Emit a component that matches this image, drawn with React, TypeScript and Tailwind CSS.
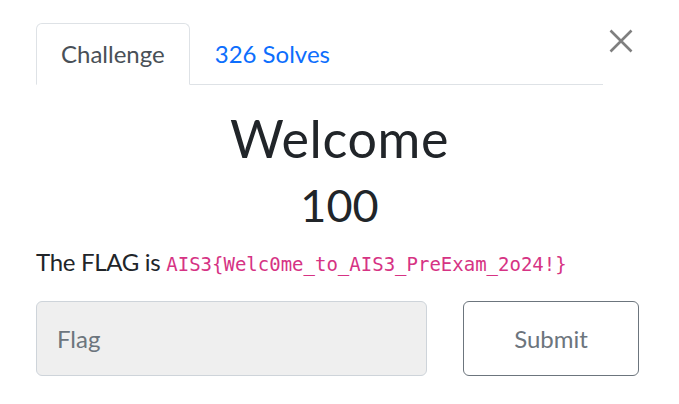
export default function App() {
  return (
    <div className="w-[679px] h-[404px] bg-white font-['Lato','Noto_Sans',sans-serif] text-[#212529] overflow-hidden">
      {/* tabs + close */}
      <div className="flex items-start pt-[23px] pl-[36px]">
        <ul className="flex w-[567px] border-b border-[#dee2e6]">
          <li className="-mb-px">
            <span className="block px-[24px] py-[12px] text-[24px] leading-[36px] text-[#495057] bg-white border border-[#dee2e6] border-b-white rounded-t-[6px]">
              Challenge
            </span>
          </li>
          <li className="-mb-px">
            <span className="block px-[24px] py-[12px] text-[24px] leading-[36px] text-[#0d6efd] border border-transparent">
              326 Solves
            </span>
          </li>
        </ul>
        <button type="button" className="ml-[6px] mt-[6px] w-[24px] h-[24px]">
          <svg width="24" height="24" viewBox="0 0 24 24" fill="none" stroke="#7f7f7f" strokeWidth="2.6">
            <path d="M1.5 1.5l21 21M22.5 1.5l-21 21" />
          </svg>
        </button>
      </div>

      {/* title */}
      <div className="px-[36px] text-center">
        <h2 className="mt-[22px] text-[52px] leading-[1.2] font-normal tracking-[0.6px]">Welcome</h2>
        <h3 className="mt-[9px] text-[45px] leading-[1.2] font-normal">100</h3>
      </div>

      <p className="mt-[12px] px-[36px] text-[24px] leading-[36px] tracking-[-0.3px]">
        The FLAG is{" "}
        <code className="font-['DejaVu_Sans_Mono',monospace] text-[19px] tracking-normal text-[#d63384]">
          AIS3{"{"}Welc0me_to_AIS3_PreExam_2o24!{"}"}
        </code>
      </p>

      {/* form */}
      <div className="flex mt-[19px] pl-[36px] gap-[36px]">
        <input
          type="text"
          placeholder="Flag"
          className="w-[391px] h-[75px] px-[20px] rounded-[6px] border border-[#ced4da] bg-[#efefef] text-[24px] placeholder:text-[#6c757d] outline-none"
        />
        <button
          type="button"
          className="w-[176px] h-[75px] rounded-[6px] border border-[#6c757d] bg-white text-[24px] text-[#6c757d]"
        >
          Submit
        </button>
      </div>
    </div>
  );
}
